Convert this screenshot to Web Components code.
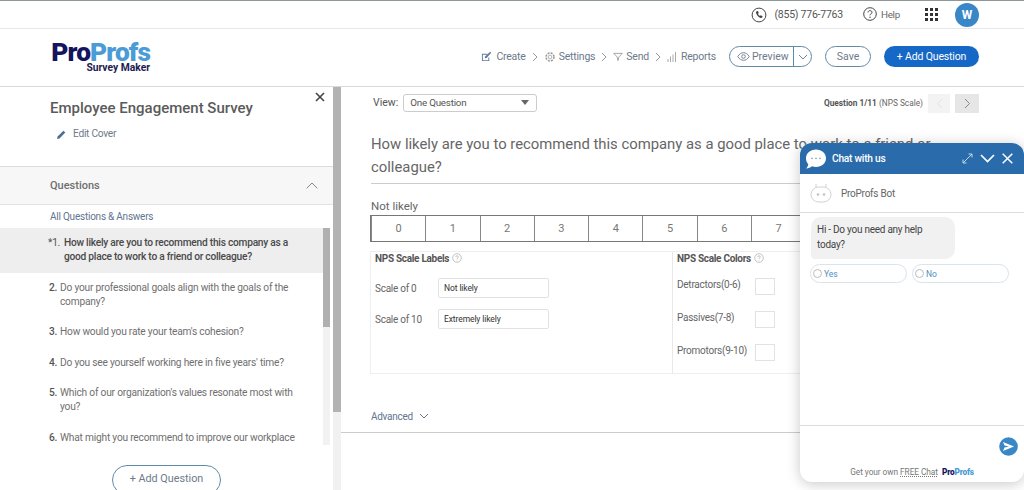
<!DOCTYPE html>
<html>
<head>
<meta charset="utf-8">
<title>Survey Maker</title>
<style>
html,body{margin:0;padding:0;height:490px;overflow:hidden;background:#fff;}
body{font-family:Roboto,"Liberation Sans",sans-serif;color:#666;position:relative;}
</style>
</head>
<body>
<app-topbar></app-topbar>
<app-header></app-header>
<div style="display:flex;height:403px;overflow:hidden">
  <survey-sidebar>
    <question-row num="*1." active>How likely are you to recommend this company as a good place to work to a friend or colleague?</question-row>
    <question-row num="2.">Do your professional goals align with the goals of the company?</question-row>
    <question-row num="3.">How would you rate your team's cohesion?</question-row>
    <question-row num="4.">Do you see yourself working here in five years' time?</question-row>
    <question-row num="5.">Which of our organization's values resonate most with you?</question-row>
    <question-row num="6.">What might you recommend to improve our workplace</question-row>
  </survey-sidebar>
  <scroll-bar thumb="325"></scroll-bar>
  <survey-main></survey-main>
</div>
<chat-widget></chat-widget>

<script>
class AppTopbar extends HTMLElement {
    constructor() {
        super();
        this.attachShadow({mode: "open"}).innerHTML = `
<style>
:host{display:flex;align-items:center;justify-content:flex-end;height:27px;border-top:1px solid #8d9896;border-bottom:1px solid #e8e8e8;padding-right:45px;font-size:10.500px;letter-spacing:-.24px;color:#555;}
.phone{display:flex;align-items:center;gap:7px;margin-right:20px;}
.help{display:flex;align-items:center;gap:4px;margin-right:25px;font-size:9.800px;color:#666;margin-top:-1px;}
.grid{display:grid;grid-template-columns:repeat(3,3px);gap:2px;margin-right:17px;}
.grid i{width:3px;height:3px;background:#333;display:block;}
.avatar{width:24px;height:24px;border-radius:50%;background:#3a87c8;color:#fff;font-weight:700;font-size:12px;display:flex;align-items:center;justify-content:center;}
svg{display:block;}
</style>
<span class="phone">
  <svg width="16" height="16" viewBox="0 0 16 16" fill="none"><circle cx="8" cy="8" r="6.900" stroke="#444" stroke-width="1"/><path d="M5.600 4.300l1.300-.4.900 2-.9.800c.3 1 1 1.800 2 2.300l.9-.8 1.800 1.100-.4 1.300c-.3.400-1 .6-1.500.4C7.500 10.300 5.600 8.200 5 5.800c-.1-.6.200-1.200.6-1.500z" fill="#444"/></svg>
  (855) 776-7763
</span>
<span class="help">
  <svg width="14" height="14" viewBox="0 0 14 14" fill="none"><circle cx="7" cy="7" r="6.300" stroke="#444"/><path d="M5 5.400C5.100 4.200 6 3.600 7 3.600c1.200 0 2 .7 2 1.700 0 1.500-2 1.500-2 3" stroke="#444" stroke-width="1"/><circle cx="7" cy="10.200" r=".7" fill="#444"/></svg>
  Help
</span>
<span class="grid"><i></i><i></i><i></i><i></i><i></i><i></i><i></i><i></i><i></i></span>
<span class="avatar">W</span>`;
    }
}
customElements.define("app-topbar", AppTopbar);

class AppHeader extends HTMLElement {
    constructor() {
        super();
        const sep = `<em><svg width="6" height="10" viewBox="0 0 6 10" fill="none"><path d="M1 1l4 4-4 4" stroke="#999"/></svg></em>`;
        this.attachShadow({mode: "open"}).innerHTML = `
<style>
:host{display:flex;align-items:center;height:55px;padding:0 45px 2px 51px;border-bottom:1px solid #d9d9d9;}
.logo{display:flex;flex-direction:column;align-items:flex-end;width:99px;line-height:1;}
.logo b{font-size:26.300px;font-weight:900;letter-spacing:-.9px;color:#14145f;height:23px;white-space:nowrap;}
.logo b span{color:#4b9bd6;}
.logo small{font-size:10.300px;font-weight:700;color:#1e2050;margin-top:1px;}
nav{margin-left:auto;display:flex;align-items:center;font-size:10.500px;letter-spacing:-.22px;color:#6d7a8a;}
nav span{display:flex;align-items:center;gap:3px;}
nav em{font-style:normal;margin:0 6px;color:#999;display:flex;}
.preview{display:flex;align-items:center;width:83px;height:21px;box-sizing:border-box;border:1px solid #5f8aa8;border-radius:11px;margin-left:13px;font-size:10.500px;color:#6d7a8a;}
.preview .a{display:flex;align-items:center;gap:2px;padding-left:7px;width:56px;border-right:1px solid #5f8aa8;height:100%;white-space:nowrap;}
.preview .b{flex:1;display:flex;justify-content:center;}
.save{height:21px;width:46px;box-sizing:border-box;border:1px solid #5f8aa8;border-radius:11px;margin-left:13px;font-size:10.500px;color:#6d7a8a;display:flex;align-items:center;justify-content:center;}
.add{height:21px;width:95px;border-radius:11px;background:#1668c7;color:#fff;margin-left:13px;font-size:10.500px;letter-spacing:-.15px;display:flex;align-items:center;justify-content:center;}
svg{display:block;}
</style>
<div class="logo"><b>Pro<span>Profs</span></b><small>Survey Maker</small></div>
<nav>
  <span style="gap:4px"><svg width="11" height="11" viewBox="0 0 12 12" fill="none"><path d="M1 3h6v1H2v6h6V7h1v4H1z" fill="#5e7a96"/><path d="M4 8l.5-2L10 .8l1.200 1.200L6 7.500z" fill="#5e7a96"/></svg>Create</span>
  ${sep}
  <span><svg width="12" height="12" viewBox="0 0 13 13" fill="none" stroke="#999" stroke-width=".8"><circle cx="6.500" cy="6.500" r="2"/><circle cx="6.500" cy="6.500" r="4.300" stroke-dasharray="2.200 1.200" stroke-width="1.600"/></svg>Settings</span>
  ${sep}
  <span><svg width="10" height="10" viewBox="0 0 11 11" fill="none" stroke="#888" stroke-width=".8"><path d="M.8 1.500h9.500L6.400 5.500 5.500 9.500 4.600 5.500z"/></svg>Send</span>
  ${sep}
  <span><svg width="11" height="10" viewBox="0 0 11 10" fill="none" stroke="#aaa"><path d="M1 10V7M3.500 10V4.500M6 10V2.500M8.500 10V0"/></svg>Reports</span>
</nav>
<div class="preview"><span class="a"><svg width="13" height="9" viewBox="0 0 13 9" fill="none" stroke="#6d7a8a" stroke-width=".9"><path d="M.7 4.500C2.500 1.700 4.500.7 6.500.7s4 1 5.800 3.800C10.500 7.300 8.500 8.300 6.500 8.300S2.500 7.300.7 4.500z"/><circle cx="6.500" cy="4.500" r="1.800"/></svg>Preview</span><span class="b"><svg width="10" height="6" viewBox="0 0 10 6" fill="none" stroke="#5f8aa8"><path d="M1 1l4 4 4-4"/></svg></span></div>
<div class="save">Save</div>
<div class="add">+ Add Question</div>`;
    }
}
customElements.define("app-header", AppHeader);

class ScrollBar extends HTMLElement {
    constructor() {
        super();
        this.attachShadow({mode: "open"}).innerHTML = `
<style>
:host{display:block;width:8px;flex:none;background:#f1f1f1;}
div{background:#b3b3b3;}
</style>
<div></div>`;
        this.shadowRoot.querySelector("div").style.height = this.getAttribute("thumb") + "px";
    }
}
customElements.define("scroll-bar", ScrollBar);

class QuestionRow extends HTMLElement {
    constructor() {
        super();
        this.attachShadow({mode: "open"}).innerHTML = `
<style>
:host{display:flex;padding:8px 24px 8.100px 49px;font-size:10.200px;letter-spacing:-.21px;line-height:14.300px;color:#6f6f6f;}
:host([active]){background:#eee;color:#4a4a4a;font-weight:500;letter-spacing:-.25px;padding:8px 30px 8px 48px;}
.n{width:11px;flex:none;font-weight:500;color:#555;white-space:nowrap;}
:host([active]) .n{width:16px;font-weight:400;}
</style>
<span class="n"></span><span><slot></slot></span>`;
        this.shadowRoot.querySelector(".n").textContent = this.getAttribute("num");
    }
}
customElements.define("question-row", QuestionRow);

class SurveySidebar extends HTMLElement {
    constructor() {
        super();
        this.attachShadow({mode: "open"}).innerHTML = `
<style>
:host{display:flex;flex-direction:column;width:333px;flex:none;height:403px;position:relative;overflow:hidden;}
.top{height:80px;padding:12px 0 0 50px;box-sizing:border-box;border-bottom:1px solid #ddd;flex:none;}
h1{margin:0;font-size:15px;font-weight:500;color:#5b5b5b;line-height:19px;}
.edit{display:flex;align-items:center;gap:7px;margin:9px 0 0 7px;font-size:10.200px;letter-spacing:-.27px;color:#6d7a8a;line-height:14px;}
.close{position:absolute;right:8px;top:5px;}
.head{height:38px;box-sizing:border-box;background:#f7f7f7;border-bottom:1px solid #e3e3e3;display:flex;align-items:center;justify-content:space-between;padding:0 15px 0 50px;font-size:11px;font-weight:500;color:#6f6f6f;flex:none;}
.all{height:23px;padding-left:50px;font-size:10px;letter-spacing:-.23px;color:#5f7590;display:flex;align-items:center;flex:none;}
.wrap{display:flex;height:217px;flex:none;}
.list{flex:none;width:323px;overflow:hidden;}
.track{width:7px;background:#f2f2f2;flex:none;}
.thumb{height:99px;background:#b0b0b0;}
.foot{flex:1;display:flex;justify-content:center;padding-top:20px;}
.btn{height:30px;width:109px;box-sizing:border-box;border:1px solid #5f8aa8;border-radius:15px;font-size:10.800px;color:#6d7a8a;display:flex;align-items:center;justify-content:center;flex:none;padding-bottom:4px;}
svg{display:block;}
</style>
<div class="top">
  <h1>Employee Engagement Survey</h1>
  <div class="edit"><svg width="9" height="9" viewBox="0 0 9 9"><path d="M0 9l.6-2.500L6.400.7l1.900 1.900L2.500 8.400z" fill="#4f6f96"/></svg>Edit Cover</div>
</div>
<svg class="close" width="10" height="10" viewBox="0 0 10 10" fill="none" stroke="#444" stroke-width="1.600"><path d="M1 1l8 8M9 1l-8 8"/></svg>
<div class="head">Questions<svg width="12" height="7" viewBox="0 0 12 7" fill="none" stroke="#888"><path d="M.7 6.300L6 1l5.300 5.300"/></svg></div>
<div class="all">All Questions &amp; Answers</div>
<div class="wrap"><div class="list"><slot></slot></div><div class="track"><div class="thumb"></div></div></div>
<div class="foot"><div class="btn">+ Add Question</div></div>`;
    }
}
customElements.define("survey-sidebar", SurveySidebar);

class NpsScale extends HTMLElement {
    constructor() {
        super();
        const cells = Array.from({length: 11}, (_, i) => `<span>${i}</span>`).join("");
        this.attachShadow({mode: "open"}).innerHTML = `
<style>
:host{display:grid;grid-template-columns:repeat(11,1fr);height:25px;border:1px solid #777;width:597px;font-size:11px;color:#777;}
span{display:flex;align-items:center;justify-content:center;border-left:1px solid #888;}
span:first-child{border-left:0;}
</style>${cells}`;
    }
}
customElements.define("nps-scale", NpsScale);

class SurveyMain extends HTMLElement {
    constructor() {
        super();
        const help = `<svg width="10" height="10" viewBox="0 0 10 10" fill="none" stroke="#aaa" stroke-width=".7"><circle cx="5" cy="5" r="4.300"/><path d="M3.700 4c0-.8.6-1.200 1.300-1.200s1.300.4 1.300 1.100c0 .9-1.300 1-1.300 2M5 6.800v.7"/></svg>`;
        this.attachShadow({mode: "open"}).innerHTML = `
<style>
:host{display:block;flex:1;min-width:0;padding:0 45px 0 29px;font-size:11.500px;color:#666;}
.bar{display:flex;align-items:center;height:32px;margin-bottom:1px;}
.view{font-size:10.500px;color:#555;margin:0 5px 2px 3px;}
.select{width:134px;height:18px;border:1px solid #ccc;border-radius:3px;box-sizing:border-box;display:flex;align-items:center;justify-content:space-between;padding:0 7px 1px 6px;font-size:9.800px;letter-spacing:-.22px;color:#555;}
.tri{width:0;height:0;border:4px solid transparent;border-top:5px solid #666;border-bottom:0;}
.pager{margin-left:auto;display:flex;align-items:center;font-size:8.300px;color:#666;gap:5px;}
.pager b{font-weight:700;color:#555;}
.pager i{width:22px;height:19px;background:#f3f3f3;display:flex;align-items:center;justify-content:center;}
.pager i+i{width:24px;background:#e6e6e6;}
.pager .g{display:flex;gap:5px;}
.q{font-size:14.850px;line-height:23px;color:#666;margin:14px 0 0 1px;width:598px;padding-bottom:7px;border-bottom:1px solid #ccc;height:43px;}
.nl{font-size:11.500px;line-height:14px;margin:15px 0 2px 1px;color:#666;}
.box{display:grid;grid-template-columns:301px 296px;height:123px;border:1px solid #eee;box-sizing:border-box;width:599px;margin-top:9px;}
.col{padding:0 4px;min-width:0;}
.col+.col{border-left:1px solid #e8e8e8;}
.t{font-size:10px;letter-spacing:-.3px;font-weight:700;color:#555;display:flex;align-items:center;gap:3px;height:14px;margin-top:-1px;}
.row{display:flex;align-items:center;margin-top:13px;height:20px;font-size:10px;letter-spacing:-.27px;color:#666;}
.row+.row{margin-top:11px;}
.lab{width:63px;}
.inp{width:111px;height:20px;box-sizing:border-box;border:1px solid #e2e2e2;border-radius:2px;display:flex;align-items:center;padding-left:5px;font-size:8.500px;letter-spacing:-.1px;color:#333;}
.cr{display:flex;align-items:center;height:17px;margin-top:16px;font-size:10px;letter-spacing:-.25px;color:#666;}
.t+.cr{margin-top:13px;}
.cr span{width:78px;white-space:nowrap;margin-top:-4px;}
.sw{width:20px;height:17px;border:1px solid #e2e2e2;box-sizing:border-box;}
.adv{display:flex;align-items:center;gap:6px;margin:35px 0 0 1px;font-size:10px;letter-spacing:-.27px;color:#5f7590;height:14px;}
.rule{border-top:1px solid #ccc;margin:9px 0 0 -29px;width:628px;}
svg{display:block;}
</style>
<div class="bar">
  <span class="view">View:</span>
  <div class="select">One Question<span class="tri"></span></div>
  <div class="pager"><span><b>Question 1/11</b> (NPS Scale)</span><span class="g"><i><svg width="7" height="11" viewBox="0 0 7 11" fill="none" stroke="#e2e2e2"><path d="M6 1L1.500 5.500 6 10"/></svg></i><i><svg width="7" height="11" viewBox="0 0 7 11" fill="none" stroke="#888"><path d="M1 1l4.500 4.500L1 10"/></svg></i></span></div>
</div>
<div class="q">How likely are you to recommend this company as a good place to work to a friend or colleague?</div>
<div class="nl">Not likely</div>
<nps-scale></nps-scale>
<div class="box">
  <div class="col">
    <div class="t">NPS Scale Labels ${help}</div>
    <div class="row"><span class="lab">Scale of 0</span><span class="inp">Not likely</span></div>
    <div class="row"><span class="lab">Scale of 10</span><span class="inp">Extremely likely</span></div>
  </div>
  <div class="col">
    <div class="t">NPS Scale Colors ${help}</div>
    <div class="cr"><span>Detractors(0-6)</span><i class="sw"></i></div>
    <div class="cr"><span>Passives(7-8)</span><i class="sw"></i></div>
    <div class="cr"><span>Promotors(9-10)</span><i class="sw"></i></div>
  </div>
</div>
<div class="adv">Advanced <svg width="10" height="6" viewBox="0 0 10 6" fill="none" stroke="#5f7590"><path d="M1 1l4 4 4-4"/></svg></div>
<div class="rule"></div>`;
    }
}
customElements.define("survey-main", SurveyMain);

class ChatWidget extends HTMLElement {
    constructor() {
        super();
        this.attachShadow({mode: "open"}).innerHTML = `
<style>
:host{position:absolute;left:800px;top:143px;width:224px;height:339px;background:#fff;border-radius:12px;box-shadow:0 2px 14px rgba(0,0,0,.22);display:flex;flex-direction:column;overflow:hidden;font-size:10px;letter-spacing:-.25px;color:#555;}
.head{height:31px;background:#2a6cab;color:#fff;display:flex;align-items:center;padding:0 11px 0 5px;flex:none;font-size:10.200px;font-weight:500;}
.head .title{margin-left:5px;flex:1;}
.head .ic{display:flex;align-items:center;gap:7px;}
.bot{height:38px;border-bottom:1px solid #ddd;display:flex;align-items:center;gap:9px;padding-left:10px;color:#666;flex:none;}
.body{flex:1;padding:4px 13px 0 11px;}
.bubble{width:144px;height:42px;box-sizing:border-box;background:#f1f1f1;border-radius:10px 10px 10px 4px;padding:6px 6px 0;line-height:14.500px;color:#444;}
.opts{display:flex;gap:5px;margin:5px 0 0 -1px;}
.opt{width:97px;height:19px;box-sizing:border-box;border:1px solid #d9e4ec;border-radius:10px;display:flex;align-items:center;padding-left:2px;gap:2px;font-size:8.500px;letter-spacing:-.1px;color:#4f8fc0;}
.opt i{width:7px;height:7px;border:1px solid #bbb;border-radius:50%;}
.input{height:57px;border-top:1px solid #ddd;box-sizing:border-box;flex:none;display:flex;justify-content:flex-end;padding:11px 6px 0 0;}
.foot{height:15px;flex:none;display:flex;justify-content:center;align-items:flex-start;gap:4px;font-size:8.300px;letter-spacing:-.05px;color:#777;margin-top:-15px;position:relative;}
.foot u{text-decoration:underline dotted;}
.foot b{font-weight:900;color:#14145f;letter-spacing:-.2px;}
.foot b span{color:#4b9bd6;}
svg{display:block;}
</style>
<div class="head">
  <svg width="22" height="22" viewBox="0 0 22 22"><path d="M11 1.500c5.600 0 10 3.700 10 8.800s-4.400 8.700-10 8.700c-1.400 0-2.700-.2-3.900-.7-1.400 1.200-3.400 2.200-6 2.200 1.300-1.300 2-2.700 2.100-4.300C1.700 14.600 1 12.500 1 10.300 1 5.200 5.400 1.500 11 1.500z" fill="#fff"/><circle cx="7" cy="10.300" r=".9" fill="#8ab"/><circle cx="11" cy="10.300" r=".9" fill="#8ab"/><circle cx="15" cy="10.300" r=".9" fill="#8ab"/></svg>
  <span class="title">Chat with us</span>
  <span class="ic">
    <svg width="11" height="11" viewBox="0 0 11 11" fill="none" stroke="#cfe0ef" stroke-width=".9"><path d="M1 10L10 1M6.500 1H10V4.500M1 6.500V10H4.500"/></svg>
    <svg width="15" height="9" viewBox="0 0 15 9" fill="none" stroke="#fff" stroke-width="1.700"><path d="M1 1l6.500 6.500L14 1"/></svg>
    <svg width="11" height="11" viewBox="0 0 11 11" fill="none" stroke="#fff" stroke-width="1.500"><path d="M.7.700l9.600 9.600M10.300.700L.700 10.300"/></svg>
  </span>
</div>
<div class="bot">
  <svg width="22" height="20" viewBox="0 0 22 20" fill="none" stroke="#ccc" stroke-width=".9"><path d="M6 4V1M16 4V1"/><rect x="1" y="4" width="20" height="15" rx="7.500"/><circle cx="8" cy="11.500" r="1" fill="#bbb"/><circle cx="14" cy="11.500" r="1" fill="#bbb"/></svg>
  ProProfs Bot
</div>
<div class="body">
  <div class="bubble">Hi - Do you need any help today?</div>
  <div class="opts"><span class="opt"><i></i>Yes</span><span class="opt"><i></i>No</span></div>
</div>
<div class="input"><svg width="19" height="19" viewBox="0 0 19 19"><circle cx="9.500" cy="9.500" r="9.300" fill="#3a87c8"/><path d="M4 5l11 4.500L4 14l1.500-3.500L10 9.500 5.500 8.500z" fill="#fff"/></svg></div>
<div class="foot"><span>Get your own <u>FREE Chat</u></span><b>Pro<span>Profs</span></b></div>`;
    }
}
customElements.define("chat-widget", ChatWidget);
</script>
</body>
</html>
